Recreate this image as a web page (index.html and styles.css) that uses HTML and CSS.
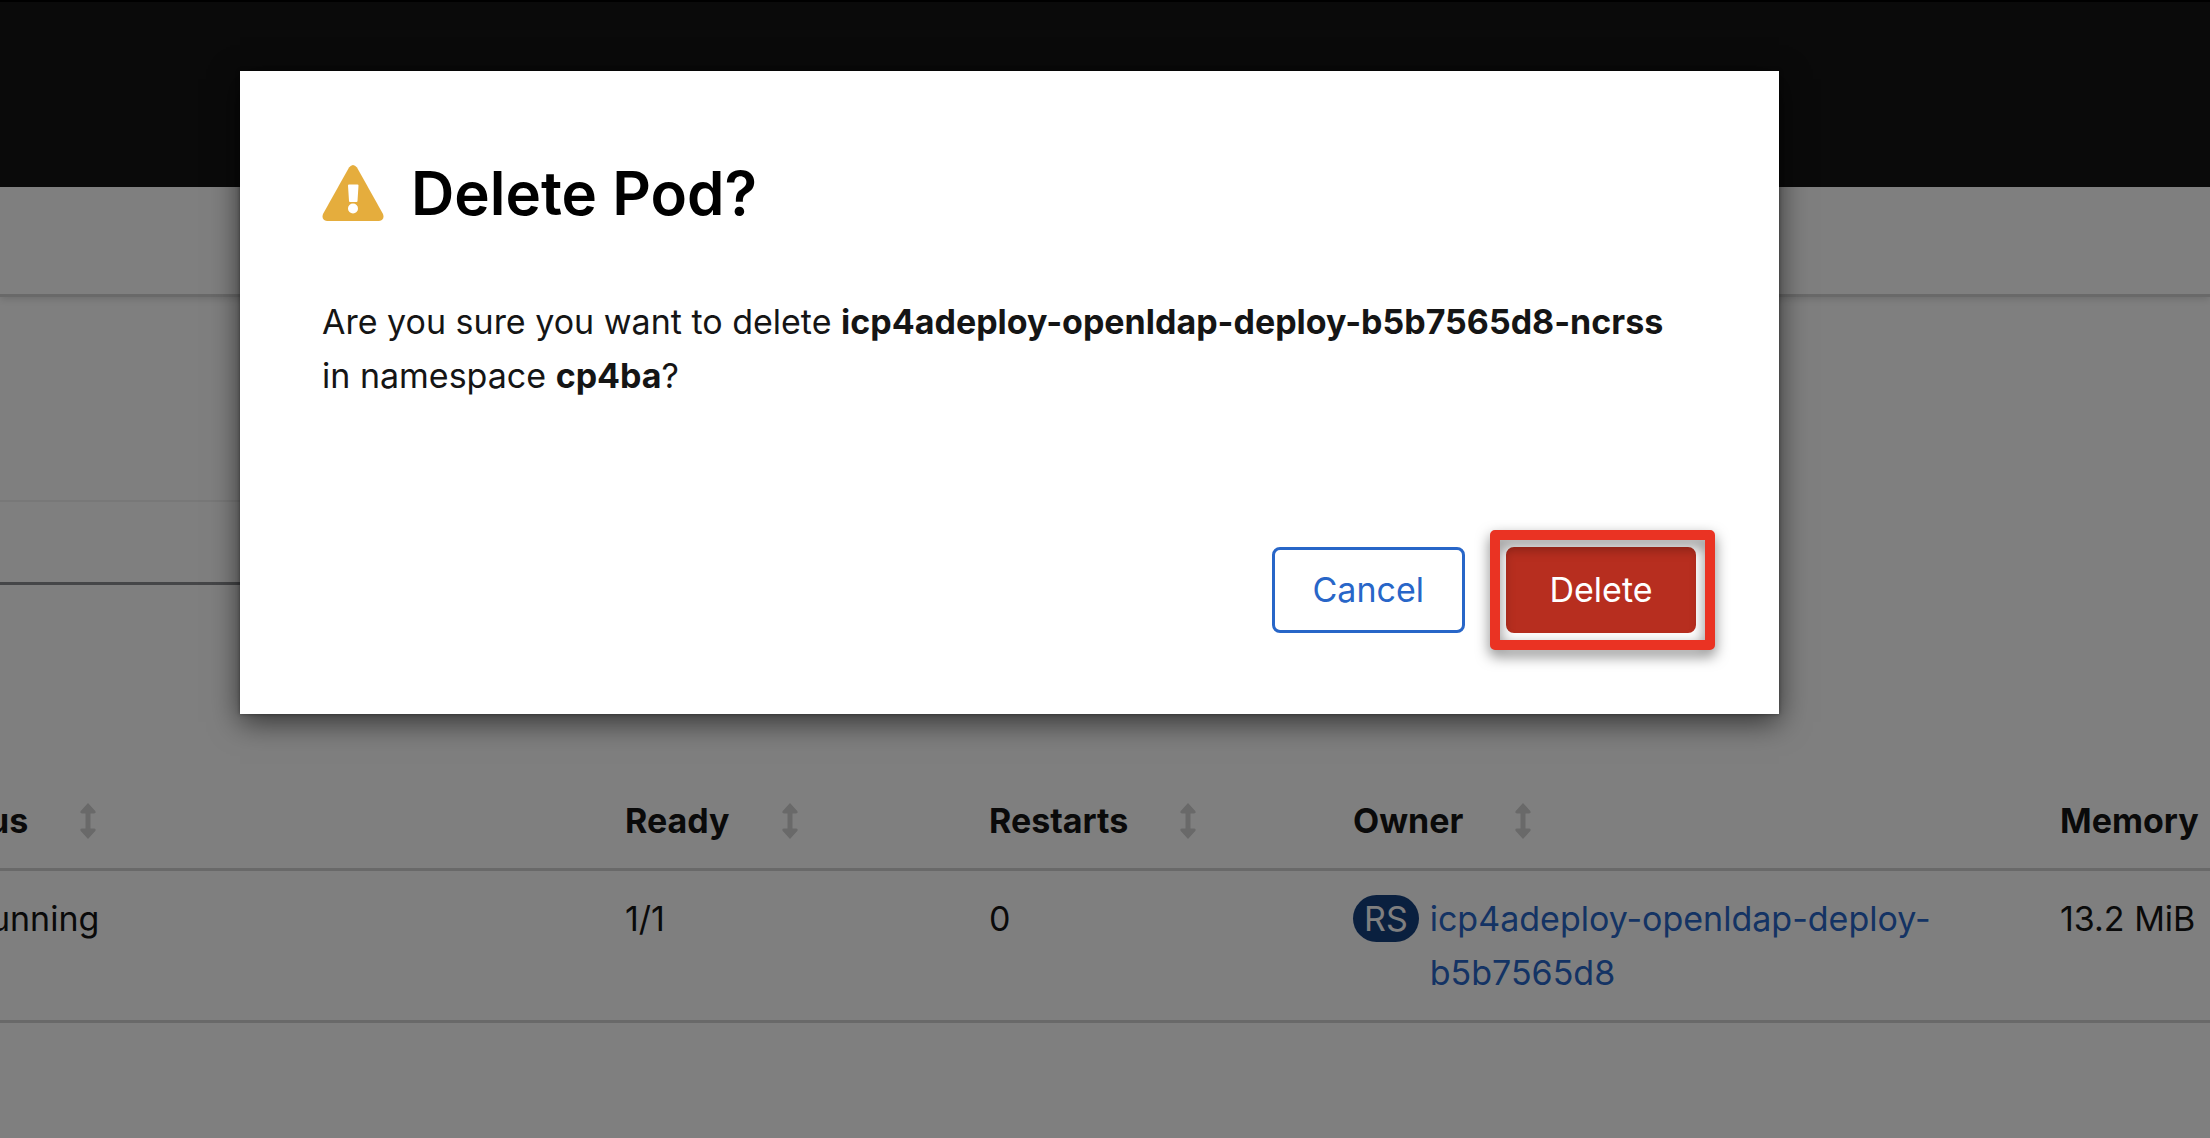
FILE: index.html
```html
<!DOCTYPE html>
<html lang="en">
<head>
<meta charset="utf-8">
<title>Delete Pod?</title>
<link rel="stylesheet" href="styles.css">
</head>
<body>
<svg class="sprite" aria-hidden="true">
  <symbol id="sort" viewBox="0 0 16 36"><path d="M8 0 15.300 8q1.200 2.500-1.300 2.500H10.500v15H14q2.500 0 1.300 2.500L8 36 .7 28q-1.200-2.500 1.300-2.500h3.500v-15H2Q-.5 10.500.7 8Z" fill="currentColor"/></symbol>
</svg>
<div class="page">
  <header class="masthead"></header>
  <div class="toolbar"></div>
  <main class="content">
    <div class="panel"></div>
    <div class="filter"></div>
    <table class="pods">
      <colgroup><col class="col-status"><col class="col-count"><col class="col-count"><col class="col-owner"><col></colgroup>
      <thead>
        <tr>
          <th scope="col"><span class="sortable">Status <svg class="sort"><use href="#sort"/></svg></span></th>
          <th scope="col"><span class="sortable">Ready <svg class="sort"><use href="#sort"/></svg></span></th>
          <th scope="col"><span class="sortable">Restarts <svg class="sort"><use href="#sort"/></svg></span></th>
          <th scope="col"><span class="sortable">Owner <svg class="sort"><use href="#sort"/></svg></span></th>
          <th scope="col">Memory</th>
        </tr>
      </thead>
      <tbody>
        <tr>
          <td><span class="state">Running</span></td>
          <td>1/1</td>
          <td>0</td>
          <td><div class="owner"><span class="badge">RS</span><a href="#">icp4adeploy-openldap-deploy-<br>b5b7565d8</a></div></td>
          <td>13.2 MiB</td>
        </tr>
      </tbody>
    </table>
  </main>
</div>
<div class="backdrop">
  <section class="modal" role="dialog" aria-modal="true" aria-labelledby="modal-title">
    <h1 class="title" id="modal-title">
      <svg class="warning" viewBox="0 0 62 56" aria-hidden="true"><path d="M27 2.500q4-5 8 0L61 49q2 6-4 7H5q-6-1-4-7Z" fill="#e5ad3d"/><path d="M27 19.500h8.500q1 0 1 1L35.500 36q0 1-1 1h-6.500q-1 0-1-1L26 20.500q0-1 1-1Z" fill="#fff"/><circle cx="31" cy="43.500" r="5" fill="#fff"/></svg>
      Delete Pod?
    </h1>
    <p class="message">Are you sure you want to delete <strong>icp4adeploy-openldap-deploy-b5b7565d8-ncrss</strong><br>in namespace <strong>cp4ba</strong>?</p>
    <div class="actions">
      <button class="btn cancel" type="button">Cancel</button>
      <div class="marked"><button class="btn danger" type="button">Delete</button></div>
    </div>
  </section>
</div>
</body>
</html>
```
FILE: styles.css
```css
* { box-sizing: border-box; }
body {
  margin: 0;
  background: #fff;
  color: #151515;
  font: 34px/54px Inter, "Liberation Sans", sans-serif;
}
.sprite { display: none; }
.page { min-height: 100vh; overflow: hidden; }

.masthead {
  height: 187px;
  background: #151515;
  border-top: 2px solid #000;
}
.toolbar {
  height: 110px;
  border-bottom: 3px solid #d2d2d2;
  box-shadow: 0 2px 8px rgba(0, 0, 0, .15);
}
.panel { height: 205px; width: 50%; border-bottom: 2px solid #f0f0f0; }
.filter { height: 83px; width: 50%; border-bottom: 3px solid #8a8d90; }

/* The status column runs off the left edge of the view */
.pods {
  width: calc(100% + 79px);
  margin: 185px 0 0 -79px;
  table-layout: fixed;
  border-collapse: separate;
  border-spacing: 0;
}
.col-status { width: 704px; }
.col-count { width: 364px; }
.col-owner { width: 707px; }
.pods th, .pods td {
  padding: 0;
  text-align: left;
  vertical-align: top;
  border-bottom: 3px solid #d2d2d2;
  white-space: nowrap;
}
.pods th { padding: 24px 0 20px; font-weight: 700; }
.pods td { padding: 21px 0 20px; }
.sortable { display: flex; align-items: center; gap: 52px; }
.sort { width: 16px; height: 36px; color: #d2d2d2; }
.state { padding-left: 47px; }
.owner { display: flex; align-items: flex-start; gap: 11px; }
.owner a { color: #2866c8; text-decoration: none; }
.badge {
  margin-top: 3px;
  padding: 0 11px;
  border-radius: 24px;
  line-height: 47px;
  background: #14407f;
  color: #fff;
}

.backdrop {
  position: absolute;
  inset: 0;
  display: flex;
  align-items: flex-start;
  background: rgba(0, 0, 0, .5);
}
.modal {
  flex: 1;
  margin: 71px 431px 0 240px;
  padding: 82px 83px 81px 82px;
  background: #fff;
  box-shadow: 0 8px 28px rgba(0, 0, 0, .6), 0 0 4px rgba(0, 0, 0, .4);
}
.title {
  display: flex;
  align-items: center;
  gap: 27px;
  margin: 0;
  color: #000;
  font-size: 60px;
  font-weight: 600;
  line-height: 80px;
}
.warning { width: 62px; height: 56px; }
.message { margin: 62px 0 0; }
.message strong { font-weight: 700; }
.actions {
  display: flex;
  justify-content: flex-end;
  gap: 41px;
  margin-top: 144px;
}
.btn {
  height: 86px;
  min-width: 190px;
  padding: 0 38px;
  border: 3px solid #2866c8;
  border-radius: 8px;
  background: #fff;
  color: #2866c8;
  font: inherit;
}
.danger { border-color: #b72e1f; background: #b72e1f; color: #fff; }
.marked { position: relative; }
.marked::after {
  content: "";
  position: absolute;
  inset: -17px -19px -17px -16px;
  border: 10px solid #ea3323;
  border-radius: 5px;
  filter: drop-shadow(0 6px 7px rgba(0, 0, 0, .5));
  pointer-events: none;
}
```
